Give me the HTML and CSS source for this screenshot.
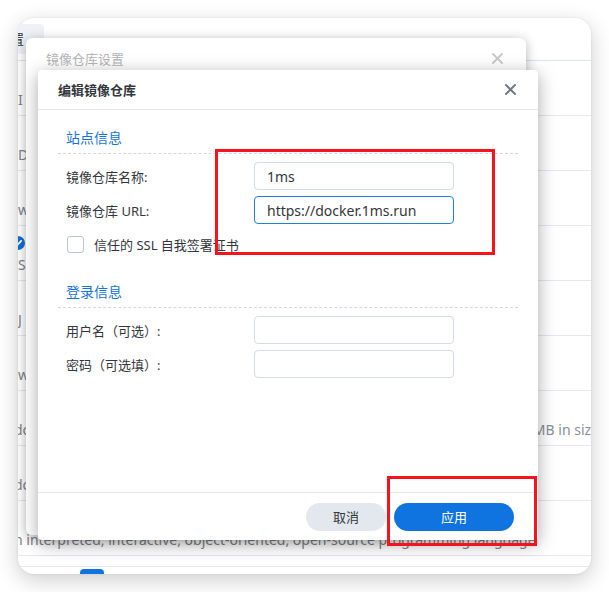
FILE: index.html
```html
<!DOCTYPE html>
<html lang="zh-CN">
<head>
<meta charset="utf-8">
<title>编辑镜像仓库</title>
<link rel="stylesheet" href="styles.css">
</head>
<body>
<div class="win">
  <div class="win-tabs"><span class="tab">设置</span></div>
  <div class="list">
    <div class="row"><div class="r-title">python</div><div class="r-desc"><span>I&nbsp;&nbsp;&nbsp;lightweight base image</span></div></div>
    <div class="row"><div class="r-title">docker</div><div class="r-desc"><span>Docker in Docker</span></div></div>
    <div class="row"><div class="r-title">wordpress</div><div class="r-desc"><span>wordPress rich content management</span></div></div>
    <div class="row"><div class="r-title has-ico"><svg class="chk" width="14" height="14" viewBox="0 0 14 14"><circle cx="7" cy="7" r="7" fill="#1170d8"/><path d="M3.8 7.2l2.2 2.1 4.2-4.4" fill="none" stroke="#fff" stroke-width="1.8" stroke-linecap="round" stroke-linejoin="round"/></svg><span>synology</span></div><div class="r-desc"><span>S&nbsp;&nbsp;Synology official image</span></div></div>
    <div class="row"><div class="r-title">jenkins</div><div class="r-desc"><span>J&nbsp;&nbsp;Jenkins automation server</span></div></div>
    <div class="row"><div class="r-title">wiki</div><div class="r-desc"><span>wiki.js modern wiki app</span></div></div>
    <div class="row"><div class="r-title">alpine</div><div class="r-desc shift"><span>docker image with a complete package index, only 5</span><span class="r-right">MB in size</span></div></div>
    <div class="row"><div class="r-title">ubuntu</div><div class="r-desc shift"><span>docker official images</span></div></div>
    <div class="row"><div class="r-title">python</div><div class="r-desc shift"><span>n interpreted, interactive, object-oriented, open-source programming language</span></div></div>
    <div class="spacer"></div>
  </div>
  <div class="win-foot"><span class="win-btn"></span></div>
</div>

<div class="dlg-back">
  <div class="back-head">
    <span>镜像仓库设置</span>
    <svg class="back-x" width="11" height="11" viewBox="0 0 11 11"><path d="M1 1l9 9M10 1l-9 9" stroke="#c6c9cd" stroke-width="1.8" stroke-linecap="round"/></svg>
  </div>
</div>

<div class="dlg">
  <div class="dlg-head">
    <span class="dlg-title">编辑镜像仓库</span>
    <svg class="close" width="11" height="11" viewBox="0 0 11 11"><path d="M1 1l9 9M10 1l-9 9" stroke="#737a83" stroke-width="2" stroke-linecap="round"/></svg>
  </div>
  <div class="dlg-body">
    <div class="sec-title">站点信息</div>
    <div class="form">
      <label>镜像仓库名称:</label>
      <input class="inp" type="text" value="1ms">
      <label>镜像仓库 URL:</label>
      <input class="inp focus" type="text" value="https://docker.1ms.run">
      <div class="check-row"><span class="cbox"></span><span>信任的 SSL 自我签署证书</span></div>
    </div>
    <div class="sec-title sec2">登录信息</div>
    <div class="form">
      <label>用户名（可选）:</label>
      <input class="inp" type="text" value="">
      <label>密码（可选填）:</label>
      <input class="inp" type="password" value="">
    </div>
  </div>
  <div class="dlg-foot">
    <button class="btn btn-cancel">取消</button>
    <button class="btn btn-apply">应用</button>
  </div>
</div>

<div class="mark mark1"></div>
<div class="mark mark2"></div>
</body>
</html>
```
FILE: styles.css
```css
html, body {
  margin: 0;
  padding: 0;
}
body {
  width: 609px;
  height: 592px;
  overflow: hidden;
  position: relative;
  background: #ffffff;
  font-family: "Noto Sans", "Noto Sans CJK SC", sans-serif;
  font-size: 13px;
  color: #333;
}

/* outer window */
.win {
  position: absolute;
  left: 18px;
  top: 18px;
  width: 573px;
  height: 556px;
  background: #fff;
  border-radius: 16px;
  box-shadow: 0 6px 22px rgba(0, 0, 0, 0.2), 0 0 3px rgba(0, 0, 0, 0.08);
  overflow: hidden;
  display: flex;
  flex-direction: column;
}
.win-tabs {
  height: 43px;
  box-sizing: border-box;
  padding-top: 6px;
  border-bottom: 1px solid #dde3ea;
  flex: none;
}
.tab {
  display: inline-block;
  margin-left: -20px;
  padding-right: 20px;
  height: 30px;
  line-height: 30px;
  background: #eef1f5;
  border-radius: 0 4px 4px 0;
  color: #333;
}
.list {
  flex: none;
}
.row {
  height: 55px;
  box-sizing: border-box;
  border-bottom: 1px solid #e3e8ee;
  padding-top: 8px;
  white-space: nowrap;
}
.r-title {
  height: 18px;
  line-height: 18px;
  padding-left: 30px;
  display: flex;
  align-items: center;
  color: #333;
}
.r-title.has-ico {
  padding-left: 0;
}
.chk {
  margin-left: -7px;
  margin-right: 23px;
  flex: none;
}
.r-desc {
  margin-top: 4px;
  margin-left: 0;
  margin-right: -8px;
  line-height: 18px;
  font-size: 14px;
  display: flex;
  justify-content: space-between;
  color: #7c8188;
}
.r-desc.shift {
  margin-left: -4px;
}
.r-right {
  color: #8a8f96;
}
.spacer {
  height: 11px;
  box-sizing: border-box;
  border-bottom: 1px solid #e3e8ee;
}
.win-foot {
  flex: 1;
  padding: 2px 0 0 62px;
}
.win-btn {
  display: block;
  width: 24px;
  height: 20px;
  background: #0f74e0;
  border-radius: 4px;
}

/* background dialog */
.dlg-back {
  position: absolute;
  left: 26px;
  top: 38px;
  width: 500px;
  height: 497px;
  background: #fff;
  border-radius: 6px;
  box-shadow: 0 2px 12px rgba(0, 0, 0, 0.3);
}
.back-head {
  height: 40px;
  padding: 0 23px 0 20px;
  display: flex;
  align-items: center;
  justify-content: space-between;
  color: #b4b6b9;
}

/* front dialog */
.dlg {
  position: absolute;
  left: 38px;
  top: 70px;
  width: 500px;
  height: 470px;
  background: #fff;
  border-radius: 4px;
  box-shadow: 0 4px 18px rgba(0, 0, 0, 0.34);
  display: flex;
  flex-direction: column;
}
.dlg-head {
  height: 40px;
  box-sizing: border-box;
  border-bottom: 1px solid #e2e6ed;
  padding: 0 22px 0 20px;
  display: flex;
  align-items: center;
  justify-content: space-between;
  flex: none;
}
.dlg-title {
  font-weight: 700;
  color: #33373c;
}
.dlg-body {
  flex: 1;
  padding: 18px 20px 0;
}
.sec-title {
  padding: 0 0 5px 8px;
  line-height: 20px;
  font-size: 14px;
  color: #1673dc;
  border-bottom: 1px dashed #d2d8e0;
}
.sec2 {
  margin-top: 24px;
}
.form {
  margin-top: 8px;
  padding-left: 8px;
  display: grid;
  grid-template-columns: 188px 200px;
  row-gap: 6px;
  align-items: center;
}
.form label {
  color: #33373c;
}
.inp {
  box-sizing: border-box;
  height: 28px;
  width: 200px;
  margin: 0;
  border: 1px solid #d3dbe6;
  border-radius: 4px;
  padding: 0 12px;
  font-family: "Noto Sans", "Noto Sans CJK SC", sans-serif;
  font-size: 14px;
  color: #33373c;
  background: #fff;
  outline: none;
}
.inp.focus {
  border-color: #1f7fe6;
}
.check-row {
  grid-column: 1 / 3;
  height: 28px;
  display: flex;
  align-items: center;
  gap: 10px;
  color: #33373c;
}
.cbox {
  width: 17px;
  height: 17px;
  box-sizing: border-box;
  margin-left: 1px;
  border: 1px solid #bcc4cf;
  border-radius: 3px;
  background: #fff;
}
.dlg-foot {
  height: 48px;
  box-sizing: border-box;
  border-top: 1px solid #e2e6ed;
  padding-right: 24px;
  display: flex;
  justify-content: flex-end;
  align-items: center;
  gap: 8px;
  flex: none;
}
.btn {
  height: 28px;
  border: none;
  border-radius: 14px;
  font-family: "Noto Sans", "Noto Sans CJK SC", sans-serif;
  font-size: 13px;
  padding: 0;
}
.btn-cancel {
  width: 80px;
  background: #e3e8ef;
  color: #33373c;
}
.btn-apply {
  width: 120px;
  background: #0f74e0;
  color: #fff;
}

/* red annotations */
.mark {
  position: absolute;
  box-sizing: border-box;
  border: 3px solid #f7131d;
}
.mark1 {
  left: 215px;
  top: 149px;
  width: 280px;
  height: 106px;
}
.mark2 {
  left: 387px;
  top: 476px;
  width: 150px;
  height: 70px;
}
```
